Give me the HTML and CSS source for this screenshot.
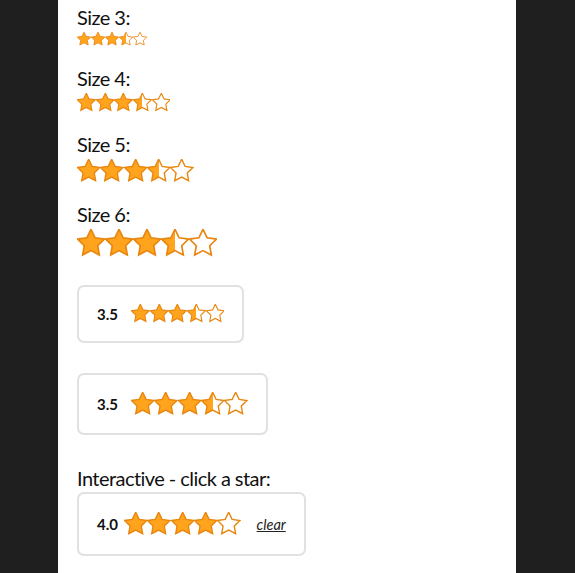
FILE: index.html
```html
<!DOCTYPE html>
<html>
<head>
<meta charset="utf-8">
<link rel="stylesheet" href="styles.css">
</head>
<body>
<svg class="defs" width="0" height="0" aria-hidden="true">
  <defs>
    <linearGradient id="half" x1="0" x2="1" y1="0" y2="0">
      <stop offset="50%" stop-color="#ffa41c"/>
      <stop offset="50%" stop-color="#ffffff"/>
    </linearGradient>
    <path id="star" d="M12 2.2l2.95 6.1 6.7.95-4.85 4.7 1.15 6.650L12 17.45l-5.95 3.15 1.15-6.65-4.85-4.7 6.7-.95z"/>
  </defs>
</svg>
<div class="page">
  <section class="size-block">
    <div class="label">Size 3:</div>
    <div class="stars s3">
      <svg viewBox="2 2 20 20"><use href="#star" class="full"/></svg><svg viewBox="2 2 20 20"><use href="#star" class="full"/></svg><svg viewBox="2 2 20 20"><use href="#star" class="full"/></svg><svg viewBox="2 2 20 20"><use href="#star" class="half"/></svg><svg viewBox="2 2 20 20"><use href="#star" class="empty"/></svg>
    </div>
  </section>
  <section class="size-block">
    <div class="label">Size 4:</div>
    <div class="stars s4">
      <svg viewBox="2 2 20 20"><use href="#star" class="full"/></svg><svg viewBox="2 2 20 20"><use href="#star" class="full"/></svg><svg viewBox="2 2 20 20"><use href="#star" class="full"/></svg><svg viewBox="2 2 20 20"><use href="#star" class="half"/></svg><svg viewBox="2 2 20 20"><use href="#star" class="empty"/></svg>
    </div>
  </section>
  <section class="size-block">
    <div class="label">Size 5:</div>
    <div class="stars s5">
      <svg viewBox="2 2 20 20"><use href="#star" class="full"/></svg><svg viewBox="2 2 20 20"><use href="#star" class="full"/></svg><svg viewBox="2 2 20 20"><use href="#star" class="full"/></svg><svg viewBox="2 2 20 20"><use href="#star" class="half"/></svg><svg viewBox="2 2 20 20"><use href="#star" class="empty"/></svg>
    </div>
  </section>
  <section class="size-block last">
    <div class="label">Size 6:</div>
    <div class="stars s6">
      <svg viewBox="2 2 20 20"><use href="#star" class="full"/></svg><svg viewBox="2 2 20 20"><use href="#star" class="full"/></svg><svg viewBox="2 2 20 20"><use href="#star" class="full"/></svg><svg viewBox="2 2 20 20"><use href="#star" class="half"/></svg><svg viewBox="2 2 20 20"><use href="#star" class="empty"/></svg>
    </div>
  </section>

  <div class="card">
    <span class="num">3.5</span>
    <div class="stars s4">
      <svg viewBox="2 2 20 20"><use href="#star" class="full"/></svg><svg viewBox="2 2 20 20"><use href="#star" class="full"/></svg><svg viewBox="2 2 20 20"><use href="#star" class="full"/></svg><svg viewBox="2 2 20 20"><use href="#star" class="half"/></svg><svg viewBox="2 2 20 20"><use href="#star" class="empty"/></svg>
    </div>
  </div>

  <div class="card">
    <span class="num">3.5</span>
    <div class="stars s5">
      <svg viewBox="2 2 20 20"><use href="#star" class="full"/></svg><svg viewBox="2 2 20 20"><use href="#star" class="full"/></svg><svg viewBox="2 2 20 20"><use href="#star" class="full"/></svg><svg viewBox="2 2 20 20"><use href="#star" class="half"/></svg><svg viewBox="2 2 20 20"><use href="#star" class="empty"/></svg>
    </div>
  </div>

  <section class="interactive">
    <div class="label">Interactive - click a star:</div>
    <div class="card tight">
      <span class="num">4.0</span>
      <div class="stars s5">
        <svg viewBox="2 2 20 20"><use href="#star" class="full"/></svg><svg viewBox="2 2 20 20"><use href="#star" class="full"/></svg><svg viewBox="2 2 20 20"><use href="#star" class="full"/></svg><svg viewBox="2 2 20 20"><use href="#star" class="full"/></svg><svg viewBox="2 2 20 20"><use href="#star" class="empty"/></svg>
      </div>
      <a class="clear" href="#">clear</a>
    </div>
  </section>
</div>
</body>
</html>
```

FILE: styles.css
```css
* { box-sizing: border-box; }
html, body {
  margin: 0;
  padding: 0;
  background: #1f1f1f;
  height: 100%;
  overflow: hidden;
}
.defs { position: absolute; width: 0; height: 0; }
.page {
  margin-left: 58px;
  width: 458px;
  min-height: 100%;
  background: #ffffff;
  padding: 4px 19px 0;
  font-family: Lato, "Noto Sans", sans-serif;
  color: #111111;
}
.label {
  font-size: 20px;
  line-height: 27px;
  height: 27px;
  letter-spacing: -0.55px;
}
.size-block { margin-bottom: 19px; }
.size-block.last { margin-bottom: 28px; }
.stars {
  display: flex;
  margin-top: 1px;
}
.stars svg { display: block; flex: none; }
.s3 svg { width: 14px; height: 14px; }
.s4 svg { width: 18.67px; height: 18.67px; }
.s5 svg { width: 23.33px; height: 23.33px; }
.s6 svg { width: 28px; height: 28px; }
.card .stars { margin-top: 0; }
use { stroke: #e8860f; stroke-width: 1.2; stroke-linejoin: miter; }
.full { fill: #ffa41c; }
.half { fill: url(#half); }
.empty { fill: #ffffff; }
.card {
  display: flex;
  width: max-content;
  align-items: center;
  gap: 13px;
  border: 2px solid #e1e1e4;
  border-radius: 7px;
  padding: 17.5px 18px;
  margin-bottom: 30px;
}
.num {
  font-weight: 700;
  font-size: 15px;
  line-height: 18px;
}
.interactive { margin-top: 0; }
.card.tight { gap: 6px; padding: 18.5px 18px 18.5px 18px; margin-bottom: 0; }
.clear {
  margin-left: 10px;
  font-style: italic;
  font-size: 14.5px;
  color: #222222;
  text-decoration: underline;
}
```
